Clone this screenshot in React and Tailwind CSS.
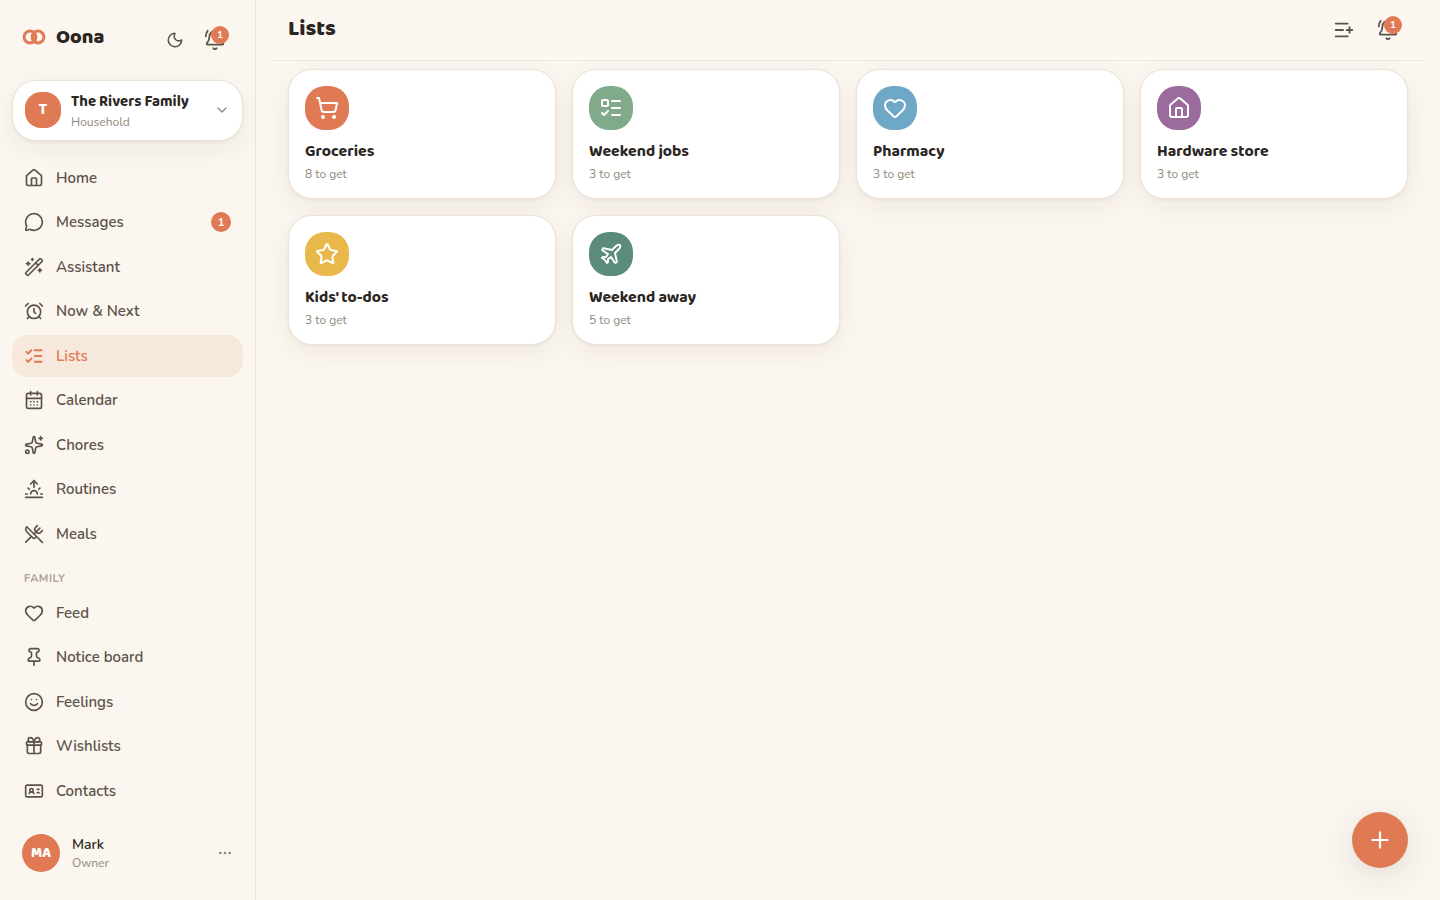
import {
  AlarmClock, BellRing, CalendarDays, ChevronDown, Ellipsis, Heart, House, IdCard, ListChecks,
  ListPlus, ListTodo, MessageCircle, Moon, Pin, Plane, Plus, ShoppingCart, Smile, Sparkles, Star,
  Sunrise, UtensilsCrossed, WandSparkles,
} from 'lucide-react';

const DISPLAY = "font-['Baloo_2','Lato',sans-serif]";

function Gift({ size, strokeWidth, className }) {
  return (
    <svg
      width={size}
      height={size}
      viewBox="0 0 24 24"
      fill="none"
      stroke="currentColor"
      strokeWidth={strokeWidth}
      strokeLinecap="round"
      strokeLinejoin="round"
      className={className}
      aria-hidden="true"
    >
      <path d="M12 7v14" />
      <path d="M20 11v8a2 2 0 0 1-2 2H6a2 2 0 0 1-2-2v-8" />
      <path d="M7.5 7a1 1 0 0 1 0-5A4.8 8 0 0 1 12 7a4.8 8 0 0 1 4.5-5 1 1 0 0 1 0 5" />
      <rect x="3" y="7" width="18" height="4" rx="1" />
    </svg>
  );
}

const mainNav = [
  { label: 'Home', icon: House },
  { label: 'Messages', icon: MessageCircle, badge: 1 },
  { label: 'Assistant', icon: WandSparkles },
  { label: 'Now & Next', icon: AlarmClock },
  { label: 'Lists', icon: ListChecks, active: true },
  { label: 'Calendar', icon: CalendarDays },
  { label: 'Chores', icon: Sparkles },
  { label: 'Routines', icon: Sunrise },
  { label: 'Meals', icon: UtensilsCrossed },
];

const familyNav = [
  { label: 'Feed', icon: Heart },
  { label: 'Notice board', icon: Pin },
  { label: 'Feelings', icon: Smile },
  { label: 'Wishlists', icon: Gift },
  { label: 'Contacts', icon: IdCard },
];

const lists = [
  { name: 'Groceries', count: 8, icon: ShoppingCart, color: 'bg-[#e07a55]' },
  { name: 'Weekend jobs', count: 3, icon: ListTodo, color: 'bg-[#81aa8b]' },
  { name: 'Pharmacy', count: 3, icon: Heart, color: 'bg-[#6fa8c7]' },
  { name: 'Hardware store', count: 3, icon: House, color: 'bg-[#9b6b9e]' },
  { name: "Kids' to-dos", count: 3, icon: Star, color: 'bg-[#e8b84a]' },
  { name: 'Weekend away', count: 5, icon: Plane, color: 'bg-[#5b8c7b]' },
];

function Logo() {
  return (
    <svg width="24" height="16" viewBox="0 0 24 16" fill="none" stroke="#e07a55" strokeWidth="3" aria-hidden="true">
      <circle cx="8" cy="8" r="5.9" />
      <circle cx="16" cy="8" r="5.9" />
      <path d="M12 3.6a5.9 5.9 0 0 1 0 8.8a5.9 5.9 0 0 1 0-8.8z" fill="#e07a55" fillOpacity="0.7" stroke="none" />
    </svg>
  );
}

function BellButton() {
  return (
    <button type="button" aria-label="Notifications" className="relative flex size-10 items-center justify-center text-[#5c534a]">
      <BellRing size={22} strokeWidth={2} />
      <span className="absolute top-1.5 right-1.5 flex size-[18px] items-center justify-center rounded-full bg-[#e07a55] text-[10px] leading-none font-bold text-white">
        1
      </span>
    </button>
  );
}

function NavItem({ label, icon: Icon, badge, active }) {
  return (
    <a
      href="#"
      aria-current={active ? 'page' : undefined}
      className={`flex items-center gap-3 rounded-2xl px-3 py-2.5 text-[15px] leading-normal font-semibold ${
        active ? 'bg-[#f7e8dc] text-[#e07a55]' : 'text-[#5c534a]'
      }`}
    >
      <Icon size={20} strokeWidth={active ? 2.4 : 2} className="shrink-0" />
      <span className="flex-1">{label}</span>
      {badge && (
        <span className="flex size-5 items-center justify-center rounded-full bg-[#e07a55] text-[11px] leading-none font-bold text-white">
          {badge}
        </span>
      )}
    </a>
  );
}

function Sidebar() {
  return (
    <aside className="sticky top-0 flex h-screen w-64 shrink-0 flex-col border-r border-[#ebe2d8] px-3 pt-4 pb-4 antialiased">
      <div className="flex h-12 items-center pl-2.5">
        <div className="flex flex-1 items-center gap-2.5 pb-1.5">
          <Logo />
          <span className={`${DISPLAY} text-xl leading-8 font-extrabold text-[#2b2622]`}>Oona</span>
        </div>
        <button type="button" aria-label="Dark mode" className="flex size-10 items-center justify-center text-[#5c534a]">
          <Moon size={18} strokeWidth={2} />
        </button>
        <div className="pr-2">
          <BellButton />
        </div>
      </div>

      <button
        type="button"
        className="mt-4 flex items-center gap-2.5 rounded-3xl border border-[#ede3d7] bg-white px-3 py-2 text-left shadow-[0_1px_3px_rgba(43,38,34,0.06),0_8px_24px_rgba(43,38,34,0.06)]"
      >
        <span className={`${DISPLAY} flex size-9 items-center justify-center rounded-2xl bg-[#e07a55] text-base font-bold text-white`}>
          T
        </span>
        <span className="flex flex-1 flex-col py-0.5">
          <span className={`${DISPLAY} text-[15px] leading-normal font-bold text-[#2b2622]`}>The Rivers Family</span>
          <span className="text-xs leading-4 text-[#92877a]">Household</span>
        </span>
        <ChevronDown size={16} strokeWidth={2} className="text-[#92877a]" />
      </button>

      <nav aria-label="Main" className="mt-4 flex min-h-0 flex-1 flex-col gap-0.5 overflow-hidden">
        {mainNav.map((item) => (
          <NavItem key={item.label} {...item} />
        ))}
        <h2 className="px-3 pt-3.5 pb-0.5 text-[11px] leading-normal font-bold tracking-wider text-[#aea396] uppercase">Family</h2>
        {familyNav.map((item) => (
          <NavItem key={item.label} {...item} />
        ))}
      </nav>

      <div className="flex items-center gap-3 px-2.5 py-3">
        <span className={`${DISPLAY} flex size-[38px] items-center justify-center rounded-full bg-[#e07a55] text-sm font-extrabold text-white`}>
          MA
        </span>
        <div className="flex flex-1 flex-col">
          <span className="text-sm leading-5 font-semibold text-[#2b2622]">Mark</span>
          <span className="text-xs leading-4 text-[#92877a]">Owner</span>
        </div>
        <button type="button" aria-label="Account menu" className="text-[#92877a]">
          <Ellipsis size={16} strokeWidth={2} />
        </button>
      </div>
    </aside>
  );
}

function ListCard({ name, count, icon: Icon, color }) {
  return (
    <a
      href="#"
      className="flex flex-col rounded-3xl border border-[#ede3d7] bg-white p-4 shadow-[0_1px_3px_rgba(43,38,34,0.06),0_8px_24px_rgba(43,38,34,0.06)]"
    >
      <span className={`flex size-11 items-center justify-center rounded-[20px] text-white ${color}`}>
        <Icon size={24} strokeWidth={2} />
      </span>
      <h2 className={`${DISPLAY} mt-2.5 text-base leading-6 font-bold text-[#2b2622]`}>{name}</h2>
      <p className="mt-0.5 text-xs leading-4 text-[#92877a]">{count} to get</p>
    </a>
  );
}

export default function App() {
  return (
    <div className="flex min-h-screen bg-[#fbf6ef] font-['Nunito','Open_Sans',sans-serif]">
      <Sidebar />
      <main className="min-w-0 flex-1 px-4 antialiased">
        <header className="flex h-[61px] items-center justify-between border-b border-[#f1eae2] bg-[#fcf7f0] px-4">
          <h1 className={`${DISPLAY} pb-0.5 text-[22px] leading-8 font-extrabold text-[#2b2622]`}>Lists</h1>
          <div className="flex items-center gap-1">
            <button type="button" aria-label="New list" className="flex size-10 items-center justify-center text-[#5c534a]">
              <ListPlus size={22} strokeWidth={2} />
            </button>
            <BellButton />
          </div>
        </header>
        <div className="grid grid-cols-4 gap-4 px-4 pt-2">
          {lists.map((list) => (
            <ListCard key={list.name} {...list} />
          ))}
        </div>
      </main>
      <button
        type="button"
        aria-label="Add"
        className="fixed right-8 bottom-8 flex size-14 items-center justify-center rounded-full bg-[#e07a55] text-white shadow-[0_8px_32px_rgba(43,38,34,0.12)]"
      >
        <Plus size={26} strokeWidth={2} />
      </button>
    </div>
  );
}
